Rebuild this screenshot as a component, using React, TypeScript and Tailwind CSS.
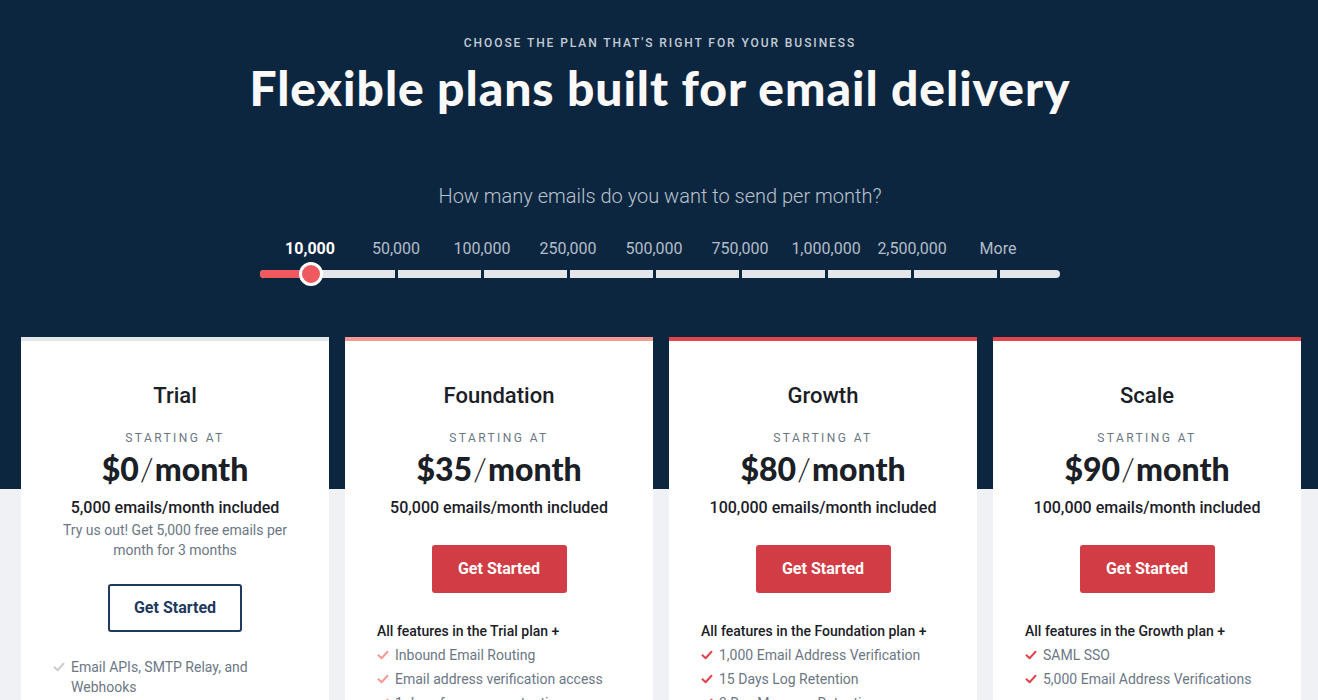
import React from "react";

const labels = ["10,000", "50,000", "100,000", "250,000", "500,000", "750,000", "1,000,000", "2,500,000", "More"];

function Check({ color }: { color: string }) {
  return (
    <svg width="12" height="10" viewBox="0 0 12 10" className="shrink-0">
      <path d="M1.5 5.2 L4.6 8.2 L10.5 1.8" fill="none" stroke={color} strokeWidth="2" strokeLinecap="round" strokeLinejoin="round" />
    </svg>
  );
}

type Plan = {
  name: string;
  price: string;
  included: string;
  desc?: string;
  border: string;
  outline?: boolean;
  header?: string;
  check: string;
  features: string[];
};

const plans: Plan[] = [
  {
    name: "Trial",
    price: "$0",
    included: "5,000 emails/month included",
    desc: "Try us out! Get 5,000 free emails per month for 3 months",
    border: "border-t-[#e3e6ea]",
    outline: true,
    check: "#c9cdd2",
    features: ["Email APIs, SMTP Relay, and Webhooks"],
  },
  {
    name: "Foundation",
    price: "$35",
    included: "50,000 emails/month included",
    border: "border-t-[#f49a94]",
    header: "All features in the Trial plan +",
    check: "#f49a94",
    features: ["Inbound Email Routing", "Email address verification access", "1 day of message retention"],
  },
  {
    name: "Growth",
    price: "$80",
    included: "100,000 emails/month included",
    border: "border-t-[#e2444b]",
    header: "All features in the Foundation plan +",
    check: "#e2444b",
    features: ["1,000 Email Address Verification", "15 Days Log Retention", "3 Day Message Retention"],
  },
  {
    name: "Scale",
    price: "$90",
    included: "100,000 emails/month included",
    border: "border-t-[#e2444b]",
    header: "All features in the Growth plan +",
    check: "#e2444b",
    features: ["SAML SSO", "5,000 Email Address Verifications"],
  },
];

function Card({ p }: { p: Plan }) {
  return (
    <div className={`bg-white border-t-4 ${p.border} h-[400px] px-8 pt-[41px] flex flex-col items-center`}>
      <div className="text-[22px] leading-[28px] font-medium text-[#1b2027]">{p.name}</div>
      <div className="mt-[20px] text-[12px] leading-[16px] tracking-[0.2em] text-[#6b7785]">STARTING AT</div>
      <div className="mt-[3px] text-[32px] leading-[40px] font-black text-[#1b2027] font-['Lato',sans-serif]">
        {p.price}
        <span className="font-light mx-[1px]">/</span>
        month
      </div>
      <div className="mt-[7px] text-[16px] leading-[24px] font-medium text-[#1b2027]">{p.included}</div>
      {p.desc && <div className="text-[14px] leading-[20px] text-[#6b7785] text-center">{p.desc}</div>}
      {p.outline ? (
        <button className="mt-[24px] h-12 w-[134px] border-2 border-[#1e3a5f] rounded-[3px] text-[16px] font-bold text-[#1e3a5f]">
          Get Started
        </button>
      ) : (
        <button className="mt-[25px] h-12 w-[135px] bg-[#d13c45] rounded-[3px] text-[16px] font-bold text-white">Get Started</button>
      )}
      <div className={`self-stretch ${p.header ? "mt-[28px]" : "mt-[25px]"}`}>
        {p.header && <div className="text-[14px] leading-[20px] font-medium text-[#1b2027] mb-1">{p.header}</div>}
        <ul className="flex flex-col gap-1">
          {p.features.map((f) => (
            <li key={f} className="flex items-start gap-[6px] text-[14px] leading-[20px] text-[#6b7785]">
              <span className="h-5 flex items-center w-3 justify-center">
                <Check color={p.check} />
              </span>
              <span>{f}</span>
            </li>
          ))}
        </ul>
      </div>
    </div>
  );
}

export default function App() {
  const segs = [135, 83, 83, 83, 83, 83, 83, 83, 60];
  return (
    <div className="w-[1318px] h-[700px] overflow-hidden font-['Roboto',sans-serif] bg-[linear-gradient(to_bottom,#0c2640_489px,#eff1f5_489px)]">
      <div className="flex flex-col items-center pl-[2px]">
        <div className="mt-[36px] text-[12px] leading-[14px] font-medium tracking-[0.16em] text-[#c3cbd4]">
          CHOOSE THE PLAN THAT'S RIGHT FOR YOUR BUSINESS
        </div>
        <h1 className="mt-[10px] text-[48px] leading-[56px] font-black tracking-[0.02em] text-[#fbf9f8] font-['Lato',sans-serif]">
          Flexible plans built for email delivery
        </h1>
        <div className="mt-[67px] text-[20px] leading-[26px] font-light text-[#b9c3cd]">
          How many emails do you want to send per month?
        </div>
        <div className="mt-[30px] w-[800px]">
          <div className="flex pl-[7px]">
            {labels.map((l, i) => (
              <div
                key={l}
                className={`w-[86px] text-center text-[16px] leading-[20px] ${i === 0 ? "font-bold text-white" : "text-[#b3bdc8]"}`}
              >
                {l}
              </div>
            ))}
          </div>
          <div className="relative mt-[11px] flex gap-[3px] h-2">
            {segs.map((w, i) => (
              <div
                key={i}
                style={{ width: w }}
                className={`h-2 bg-[#e4e6e9] ${i === 0 ? "rounded-l-full" : ""} ${i === segs.length - 1 ? "rounded-r-full" : ""}`}
              />
            ))}
            <div className="absolute left-0 top-0 h-2 w-[51px] bg-[#f05a5e] rounded-l-full" />
            <div className="absolute left-[39px] top-[-8px] w-6 h-6 rounded-full bg-[#f05a5e] border-[3px] border-white" />
          </div>
        </div>
      </div>
      <div className="ml-[21px] mt-[59px] w-[1280px] grid grid-cols-4 gap-4">
        {plans.map((p) => (
          <Card key={p.name} p={p} />
        ))}
      </div>
    </div>
  );
}
